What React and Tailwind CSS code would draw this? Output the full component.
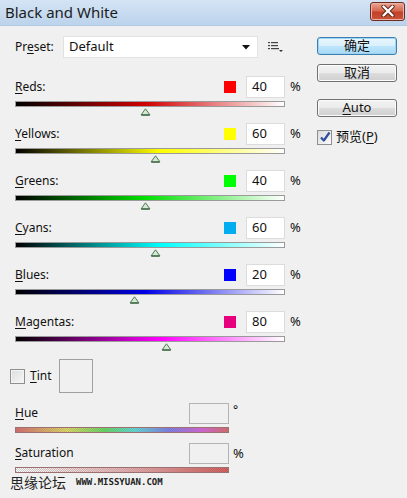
import React from "react";

const sliders = [
  { key: "R", rest: "eds:", value: 40, swatch: "bg-[#ff0000]", grad: "bg-[linear-gradient(to_right,#000_0%,#d00000_48%,#fff_100%)]" },
  { key: "Y", rest: "ellows:", value: 60, swatch: "bg-[#ffff00]", grad: "bg-[linear-gradient(to_right,#000_0%,#ffff00_54%,#fff_100%)]" },
  { key: "G", rest: "reens:", value: 40, swatch: "bg-[#00ff00]", grad: "bg-[linear-gradient(to_right,#000_0%,#00e000_48%,#fff_100%)]" },
  { key: "C", rest: "yans:", value: 60, swatch: "bg-[#00aeef]", grad: "bg-[linear-gradient(to_right,#000_0%,#00ffff_54%,#fff_100%)]" },
  { key: "B", rest: "lues:", value: 20, swatch: "bg-[#0000ff]", grad: "bg-[linear-gradient(to_right,#000_0%,#0000e6_48%,#fff_100%)]" },
  { key: "M", rest: "agentas:", value: 80, swatch: "bg-[#e6007e]", grad: "bg-[linear-gradient(to_right,#000_0%,#ff00ff_54%,#fff_100%)]" },
];

function Thumb({ value }) {
  const left = ((value + 200) / 500) * 270 - 5;
  return (
    <div className="absolute top-0" style={{ left: `${left}px` }}>
      <svg width="11" height="8" viewBox="0 0 11 8">
        <path d="M5.5 0.8 L10 7 L1 7 Z" fill="#d6e8d6" stroke="#4f7a55" strokeWidth="1" />
        <line x1="1.5" y1="7" x2="9.5" y2="7" stroke="#3e6a45" strokeWidth="1.4" />
      </svg>
    </div>
  );
}

function Slider({ s }) {
  return (
    <div className="flex flex-col mb-[7px]">
      <div className="flex items-center h-[22px] w-[285px]">
        <div className="flex-1">
          <span className="underline underline-offset-2">{s.key}</span>
          {s.rest}
        </div>
        <div className={`w-[12px] h-[12px] ${s.swatch} mr-[10px]`} />
        <div className="w-[39px] h-[22px] bg-white border border-[#dcdcdc] flex items-center pl-[5px] text-[13px]">
          {s.value}
        </div>
        <div className="ml-[5px] w-[10px] text-[13px]">%</div>
      </div>
      <div className={`mt-[3px] h-[6px] w-[270px] border border-[#9a9a9a] ${s.grad}`} />
      <div className="relative h-[8px] w-[270px] mt-[1px]">
        <Thumb value={s.value} />
      </div>
    </div>
  );
}

function Button({ children, primary }) {
  return (
    <div
      className={`w-[80px] h-[18px] rounded-[3px] border flex items-center justify-center text-[13px] ${
        primary
          ? "border-[#3c7fb1] bg-[linear-gradient(to_bottom,#eaf6fd_0%,#d9f0fc_50%,#bee6fd_51%,#a7d9f5_100%)] shadow-[inset_0_0_0_1px_#9fd4f2]"
          : "border-[#707070] bg-[linear-gradient(to_bottom,#f2f2f2_0%,#ebebeb_50%,#dddddd_51%,#cfcfcf_100%)] shadow-[inset_0_0_0_1px_#fcfcfc]"
      }`}
    >
      {children}
    </div>
  );
}

export default function App() {
  return (
    <div className="w-[407px] h-[498px] bg-[#f0f0f0] overflow-hidden font-['Noto_Sans','Noto_Sans_CJK_SC',sans-serif] text-[12px] text-[#111]">
      {/* Title bar */}
      <div className="h-[26px] flex items-center justify-between bg-[linear-gradient(to_bottom,#d4e4f5,#bcd3ec)] border-b border-[#b0c8e2]">
        <div className="pl-[5px] text-[15px] text-[#1c1c1c] font-['Noto_Sans',sans-serif] leading-none">Black and White</div>
        <div className="mr-[2px] mb-[3px] w-[35px] h-[19px] rounded-[3px] border border-[#6e2b20] bg-[linear-gradient(to_bottom,#e9a593_0%,#d66a52_45%,#c4402a_55%,#c9553b_100%)] flex items-center justify-center shadow-[inset_0_0_0_1px_#eab3a6]">
          <svg width="14" height="12" viewBox="0 0 14 12">
            <path d="M2.5 1.5 L11.5 10.5 M11.5 1.5 L2.5 10.5" stroke="#5a2418" strokeWidth="4.2" strokeLinecap="round" />
            <path d="M2.5 1.5 L11.5 10.5 M11.5 1.5 L2.5 10.5" stroke="#ffffff" strokeWidth="2.4" strokeLinecap="round" />
          </svg>
        </div>
      </div>

      <div className="flex">
        {/* Left column */}
        <div className="w-[305px] flex flex-col">
          {/* Preset */}
          <div className="mt-[10px] h-[22px] flex items-center pl-[15px]">
            <div className="w-[48px]">
              Pr<span className="underline underline-offset-2">e</span>set:
            </div>
            <div className="w-[195px] h-[22px] bg-white border border-[#e2e2e2] flex items-center justify-between pl-[5px] pr-[7px] text-[13px]">
              <span>Default</span>
              <svg width="8" height="5" viewBox="0 0 8 5">
                <path d="M0 0 L8 0 L4 4.5 Z" fill="#111" />
              </svg>
            </div>
            <div className="ml-[10px]">
              <svg width="16" height="12" viewBox="0 0 16 12">
                <rect x="0" y="1" width="2" height="1.2" fill="#444" />
                <rect x="3" y="1" width="7" height="1.2" fill="#444" />
                <rect x="0" y="4" width="2" height="1.2" fill="#444" />
                <rect x="3" y="4" width="7" height="1.2" fill="#444" />
                <rect x="0" y="7" width="2" height="1.2" fill="#444" />
                <rect x="3" y="7" width="8" height="1.2" fill="#444" />
                <path d="M11 9 L15 9 L13 11 Z" fill="#333" />
              </svg>
            </div>
          </div>

          {/* Sliders */}
          <div className="mt-[18px] pl-[15px] flex flex-col">
            {sliders.map((s) => (
              <Slider key={s.key} s={s} />
            ))}
          </div>

          {/* Tint */}
          <div className="mt-[1px] h-[34px] flex items-center pl-[10px]">
            <div className="w-[15px] h-[15px] border border-[#8e8f8f] bg-[linear-gradient(135deg,#dcdcdc,#f8f8f8)] shadow-[inset_0_0_0_1px_#f4f4f4]" />
            <div className="ml-[5px] w-[24px]">
              <span className="underline underline-offset-2">T</span>int
            </div>
            <div className="ml-[5px] w-[34px] h-[34px] border border-[#a0a0a0] bg-[#f0f0f0]" />
          </div>

          {/* Hue */}
          <div className="mt-[10px] pl-[15px] flex flex-col">
            <div className="flex items-center h-[21px]">
              <div className="w-[174px] -mt-[2px]">
                <span className="underline underline-offset-2">H</span>ue
              </div>
              <div className="w-[40px] h-[21px] border border-[#b4b4b4] bg-[#f0f0f0]" />
              <div className="ml-[4px] self-start text-[12px] leading-none mt-[1px]">°</div>
            </div>
            <div className="mt-[3px] h-[6px] w-[214px] border border-[#9a7070] [background:repeating-conic-gradient(rgba(150,150,150,0.55)_0_25%,transparent_0_50%)_0_0/2px_2px,linear-gradient(to_right,#e05a5a,#e8e050_24%,#50e050_42%,#50e0e0_56%,#7070f0_72%,#e050e0_88%,#e05a5a)]" />
          </div>

          {/* Saturation */}
          <div className="mt-[10px] pl-[15px] flex flex-col">
            <div className="flex items-center h-[21px]">
              <div className="w-[174px] -mt-[2px]">
                <span className="underline underline-offset-2">S</span>aturation
              </div>
              <div className="w-[40px] h-[21px] border border-[#b4b4b4] bg-[#f0f0f0]" />
              <div className="ml-[4px] text-[13px]">%</div>
            </div>
            <div className="mt-[3px] h-[6px] w-[214px] border border-[#9a7070] [background:repeating-conic-gradient(rgba(150,150,150,0.5)_0_25%,transparent_0_50%)_0_0/2px_2px,linear-gradient(to_right,#ffffff,#f0b0b0_50%,#d84848)]" />
          </div>

          {/* Watermark */}
          <div className="mt-[1px] pl-[10px] flex items-center h-[16px]">
            <span className="font-['Noto_Sans_CJK_SC',sans-serif] text-[14px] leading-none text-[#222]">思缘论坛</span>
            <span className="ml-[10px] font-['DejaVu_Sans_Mono',monospace] font-bold text-[9px] uppercase leading-none text-[#222]">www.missyuan.com</span>
          </div>
        </div>

        {/* Right column */}
        <div className="pl-[12px] pt-[11px] flex flex-col">
          <Button primary>确定</Button>
          <div className="mt-[9px]">
            <Button>取消</Button>
          </div>
          <div className="mt-[17px]">
            <Button>
              <span>
                <span className="underline underline-offset-2">A</span>uto
              </span>
            </Button>
          </div>
          <div className="mt-[12px] flex items-center h-[16px]">
            <div className="w-[15px] h-[15px] border border-[#8e8f8f] bg-[linear-gradient(135deg,#dcdcdc,#fafafa)] flex items-center justify-center">
              <svg width="12" height="12" viewBox="0 0 12 12">
                <path d="M2 6.5 L4.8 9.5 L10.5 1.5" fill="none" stroke="#2c4f9e" strokeWidth="2.2" strokeLinejoin="round" />
              </svg>
            </div>
            <div className="ml-[4px] text-[13px]">
              预览(<span className="underline underline-offset-2">P</span>)
            </div>
          </div>
        </div>
      </div>
    </div>
  );
}
